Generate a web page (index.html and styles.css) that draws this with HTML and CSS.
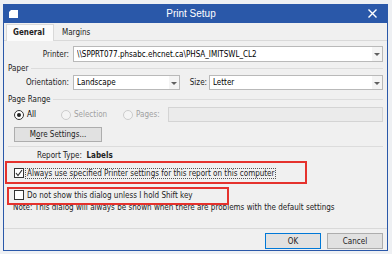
FILE: index.html
```html
<!DOCTYPE html>
<html>
  <head>
    <meta charset="UTF-8">
    <title>Print Setup</title>
    <link rel="stylesheet" href="styles.css">
  </head>
  <body>
    <div id="window">
      <div id="titlebar">
        <svg class="app-icon" width="9" height="8" viewBox="0 0 9 8"><polygon points="2,0 9,0 9,8 0,8 0,2" fill="#fff"/></svg>
        <p class="title">Print Setup</p>
        <svg class="close" width="9" height="9" viewBox="0 0 9 9"><path d="M0.5 0.5 L8.5 8.5 M8.5 0.5 L0.5 8.5" stroke="#fff" stroke-width="1.4"/></svg>
      </div>
      <div id="tabs">
        <div class="tab active">General</div>
        <div class="tab">Margins</div>
      </div>
      <div id="page">
        <div class="row printer-row">
          <label class="lbl">Printer:</label>
          <div class="combo combo-printer"><span class="val">\\SPPRT077.phsabc.ehcnet.ca\PHSA_IMITSWL_CL2</span><span class="arrow"></span></div>
        </div>
        <div class="group"><span>Paper</span></div>
        <div class="row orient-row">
          <label class="lbl">Orientation:</label>
          <div class="combo combo-orient"><span class="val">Landscape</span><span class="arrow"></span></div>
          <label class="lbl lbl-size">Size:</label>
          <div class="combo combo-size"><span class="val">Letter</span><span class="arrow"></span></div>
        </div>
        <div class="group range"><span>Page Range</span></div>
        <div class="row radio-row">
          <span class="radio on"></span><span class="radio-text">All</span>
          <span class="radio off r-sel"></span><span class="radio-text dis">Selection</span>
          <span class="radio off r-pages"></span><span class="radio-text dis">Pages:</span>
          <div class="pages-box"></div>
        </div>
        <div class="row">
          <div class="btn more">M<u>o</u>re Settings...</div>
        </div>
        <div class="sep"></div>
        <div class="report">Report Type:&nbsp; <b>Labels</b></div>
        <div class="check-row first">
          <span class="check"><svg width="8" height="8" viewBox="0 0 8 8"><polyline points="1,4 3,6.5 7,1" fill="none" stroke="#333" stroke-width="1.2"/></svg></span>
          <span class="check-text focus">Always use specified Printer settings for this report on this computer</span>
        </div>
        <div class="check-row second">
          <span class="check"></span>
          <span class="check-text">Do not show this dialog unless I hold Shift key</span>
        </div>
        <div class="note">Note: This dialog will always be shown when there are problems with the default settings</div>
      </div>
      <div id="buttons">
        <div class="btn default">OK</div>
        <div class="btn">Cancel</div>
      </div>
    </div>
    <div class="mark mark-1"></div>
    <div class="mark mark-2"></div>
  </body>
</html>
```
FILE: styles.css
```css
body {
  margin: 0;
  padding: 4px 0 0 3px;
  width: 392px;
  height: 254px;
  box-sizing: border-box;
  overflow: hidden;
  position: relative;
  background-color: #eef0f3;
  font-family: 'DejaVu Sans Condensed', 'Liberation Sans', Arial, sans-serif;
  font-size: 8px;
  color: #000;
}
p {
  margin: 0;
}
#window {
  width: 385px;
  height: 247px;
  box-sizing: border-box;
  border: 1px solid #2a58a9;
  border-top: 0;
  background-color: #f0f0f0;
  display: flex;
  flex-direction: column;
}
#titlebar {
  height: 19px;
  flex: none;
  margin: 0 -1px;
  background-color: #2a58a9;
  display: flex;
  align-items: center;
  padding: 0 11px 0 6px;
}
.app-icon {
  flex: none;
  margin-top: 1px;
}
.title {
  flex: 1;
  text-align: center;
  color: #fff;
  font-family: 'Liberation Sans', Arial, sans-serif;
  font-size: 10px;
  padding-right: 4px;
}
.close {
  flex: none;
}
#tabs {
  height: 17px;
  flex: none;
  display: flex;
  align-items: flex-end;
  padding-left: 2px;
}
.tab {
  height: 14px;
  line-height: 14px;
  padding: 0 8px;
  color: #222;
}
.tab.active {
  height: 16px;
  line-height: 15px;
  padding: 0 6px;
  width: 34px;
  background-color: #fbfbfb;
  border: 1px solid #d9d9d9;
  border-bottom: 0;
  font-weight: bold;
  margin-bottom: -1px;
  position: relative;
}
#page {
  height: 189px;
  flex: none;
  box-sizing: border-box;
  border-top: 1px solid #d9d9d9;
  border-bottom: 1px solid #d9d9d9;
  padding: 0 4px 0 0;
  display: flex;
  flex-direction: column;
}
.row {
  display: flex;
  align-items: center;
}
.printer-row {
  margin-top: 5px;
  height: 16px;
}
.lbl {
  width: 65px;
  flex: none;
  text-align: right;
  margin-right: 4px;
  color: #222;
}
.combo {
  height: 100%;
  box-sizing: border-box;
  background-color: #fff;
  border: 1px solid #b9b9b9;
  display: flex;
  align-items: center;
  padding-left: 3px;
}
.combo .val {
  flex: 1;
  white-space: nowrap;
  overflow: hidden;
}
.combo .arrow {
  flex: none;
  width: 10px;
  height: 100%;
  background-color: #f4f4f4;
  position: relative;
}
.combo .arrow::after {
  content: '';
  position: absolute;
  left: 2px;
  top: 50%;
  margin-top: -1px;
  border-left: 3px solid transparent;
  border-right: 3px solid transparent;
  border-top: 3px solid #606060;
}
.combo-printer {
  flex: 1;
}
.group {
  height: 12px;
  display: flex;
  align-items: center;
  padding-left: 4px;
  color: #222;
}
.group::after {
  content: '';
  flex: 1;
  height: 1px;
  background-color: #dcdcdc;
  margin-left: 3px;
}
.group.range {
  margin-top: 3px;
}
.orient-row {
  margin-top: 1px;
  height: 15px;
}
.combo-orient {
  width: 107px;
  flex: none;
}
.lbl-size {
  width: 27px;
  margin-right: 2px;
}
.combo-size {
  flex: 1;
}
.radio-row {
  margin-top: 2px;
  height: 15px;
  padding-left: 10px;
}
.radio {
  width: 10px;
  height: 10px;
  box-sizing: border-box;
  border-radius: 50%;
  border: 1px solid #333;
  background-color: #fff;
  flex: none;
  position: relative;
}
.radio.on::after {
  content: '';
  position: absolute;
  left: 2px;
  top: 2px;
  width: 4px;
  height: 4px;
  border-radius: 50%;
  background-color: #222;
}
.radio.off {
  border-color: #cccccc;
  background-color: #f4f4f4;
}
.radio-text {
  margin-left: 3px;
}
.radio-text.dis {
  color: #a0a0a0;
}
.r-sel {
  margin-left: 25px;
}
.r-pages {
  margin-left: 16px;
}
.pages-box {
  margin-left: 8px;
  flex: 1;
  height: 100%;
  box-sizing: border-box;
  border: 1px solid #d4d4d4;
  background-color: #ebebeb;
}
.btn {
  box-sizing: border-box;
  height: 16px;
  border: 1px solid #adadad;
  background-color: #e1e1e1;
  display: flex;
  align-items: center;
  justify-content: center;
  color: #222;
}
.btn.more {
  margin-top: 5px;
  margin-left: 10px;
  width: 88px;
  height: 15px;
}
.sep {
  height: 1px;
  background-color: #dcdcdc;
  margin: 4px 0 0 4px;
}
.report {
  margin-top: 3px;
  height: 12px;
  line-height: 12px;
  padding-left: 33px;
  color: #222;
}
.check-row {
  display: flex;
  align-items: center;
  padding-left: 10px;
}
.check-row.first {
  margin-top: 3px;
  height: 16px;
}
.check-row.second {
  margin-top: 7px;
  height: 14px;
}
.check {
  width: 10px;
  height: 10px;
  box-sizing: border-box;
  border: 1px solid #333;
  background-color: #fff;
  flex: none;
  display: flex;
  align-items: center;
  justify-content: center;
}
.check-text {
  margin-left: 3px;
  color: #222;
  white-space: nowrap;
}
.check-text.focus {
  margin-left: 2px;
  padding: 0 1px;
  outline: 1px dotted #555;
  outline-offset: 0;
}
.note {
  height: 11px;
  line-height: 11px;
  padding-left: 9px;
  color: #222;
  white-space: nowrap;
}
#buttons {
  flex: 1;
  display: flex;
  justify-content: flex-end;
  align-items: flex-start;
  gap: 6px;
  padding: 4px 4px 0 0;
}
#buttons .btn {
  width: 56px;
}
#buttons .btn.default {
  border-color: #0078d7;
}
.mark {
  position: absolute;
  box-sizing: border-box;
  border: 2px solid #e5322d;
}
.mark-1 {
  left: 5px;
  top: 161px;
  width: 302px;
  height: 23px;
}
.mark-2 {
  left: 7px;
  top: 187px;
  width: 222px;
  height: 18px;
}
```
